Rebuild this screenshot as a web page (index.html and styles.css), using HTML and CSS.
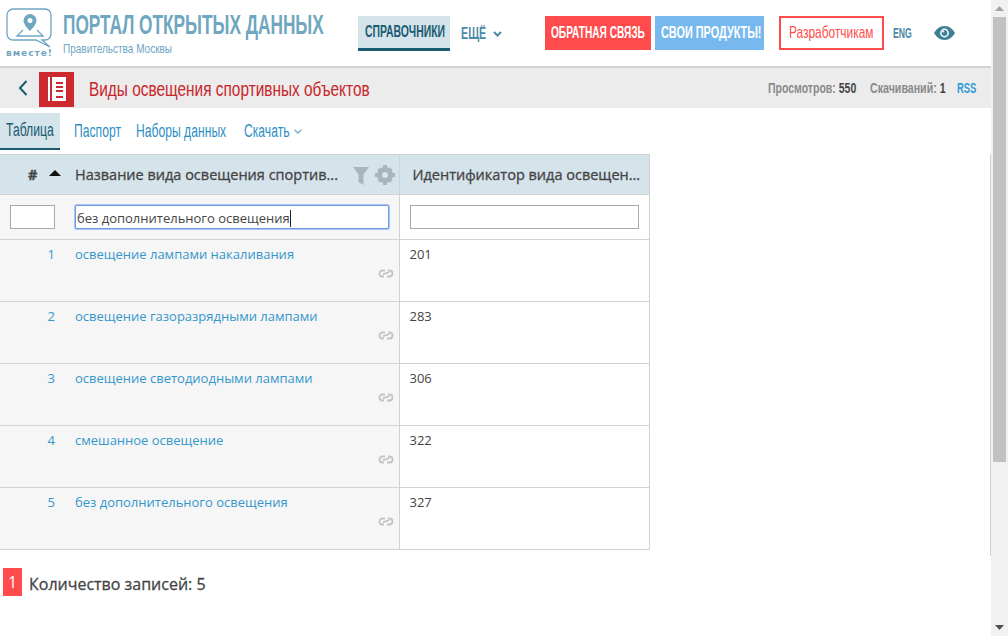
FILE: index.html
```html
<!DOCTYPE html>
<html lang="ru">
<head>
    <meta charset="UTF-8">
    <meta name="viewport" content="width=device-width, initial-scale=1.0">
    <title>Виды освещения спортивных объектов</title>
    <link rel="stylesheet" href="styles.css">
</head>
<body>
    <div class="page">
        <header class="top">
            <a href="#" class="logo">
                <svg width="47" height="41" viewBox="0 0 47 41" fill="none" stroke="#6fa6c0">
                    <path d="M7 1h32a6 6 0 0 1 6 6v19a6 6 0 0 1-6 6h-3l8 7-14-7H7a6 6 0 0 1-6-6V7a6 6 0 0 1 6-6z" stroke-width="1.300"/>
                    <path d="M24 6a6.500 6.500 0 0 0-6.500 6.500C17.500 17 24 23 24 23s6.500-6 6.500-10.500A6.500 6.500 0 0 0 24 6z" fill="#6fa6c0" stroke="none"/>
                    <circle cx="24" cy="12.500" r="2.500" fill="#fff" stroke="none"/>
                    <path d="M17 22l-6 6h26l-6-6" stroke-width="1.300"/>
                </svg>
                <span class="logo-word">вместе!</span>
            </a>
            <div class="brand">
                <div class="brand-title">ПОРТАЛ ОТКРЫТЫХ ДАННЫХ</div>
                <div class="brand-sub">Правительства Москвы</div>
            </div>
            <a href="#" class="nav-item active"><span>СПРАВОЧНИКИ</span></a>
            <a href="#" class="nav-item more"><span>ЕЩЁ</span>
                <svg width="9" height="6" viewBox="0 0 9 6" fill="none" stroke="#4a8aa5" stroke-width="2"><path d="M1 1l3.500 3.500L8 1"/></svg>
            </a>
            <a href="#" class="btn btn-red"><span>ОБРАТНАЯ СВЯЗЬ</span></a>
            <a href="#" class="btn btn-blue"><span>СВОИ ПРОДУКТЫ!</span></a>
            <a href="#" class="btn-dev"><span>Разработчикам</span></a>
            <a href="#" class="lang"><span>ENG</span></a>
            <svg class="eye" width="21" height="14" viewBox="0 0 21 14">
                <path d="M10.500 0C5.500 0 2 3.500 0 7c2 3.500 5.500 7 10.500 7S19 10.500 21 7c-2-3.500-5.500-7-10.500-7z" fill="#3f7f95"/>
                <circle cx="10.500" cy="7" r="4.400" fill="#fff"/>
                <circle cx="10.500" cy="7" r="2.900" fill="#3f7f95"/>
                <circle cx="9.300" cy="5.600" r="1" fill="#fff"/>
            </svg>
        </header>

        <div class="band">
            <svg class="back" width="10" height="16" viewBox="0 0 10 16" fill="none" stroke="#1a5b72" stroke-width="2"><path d="M8.500 1L2 8l6.500 7"/></svg>
            <div class="book">
                <svg width="18" height="24" viewBox="0 0 18 24">
                    <path d="M0 0h2v24H0zM4 0h14v24H4z" fill="#fff"/>
                    <path d="M8 5h7v2H8zM8 9h7v2H8zM8 13h7v2H8zM8 19h7v2H8z" fill="#cc2a2e"/>
                </svg>
            </div>
            <h1 class="band-title">Виды освещения спортивных объектов</h1>
            <div class="stats">
                <span class="stat-views">Просмотров: <b>550</b></span>
                <span class="stat-loads">Скачиваний: <b>1</b></span>
                <a href="#" class="stat-rss">RSS</a>
            </div>
        </div>

        <nav class="tabs">
            <a href="#" class="tab tab-table active"><span>Таблица</span></a>
            <a href="#" class="tab tab-pass"><span>Паспорт</span></a>
            <a href="#" class="tab tab-sets"><span>Наборы данных</span></a>
            <a href="#" class="tab tab-load"><span>Скачать</span>
                <svg width="8" height="5" viewBox="0 0 8 5" fill="none" stroke="#7fb0c8" stroke-width="1.500"><path d="M.5.700L4 4 7.500.700"/></svg>
            </a>
        </nav>

        <div class="table-wrap">
            <table class="grid">
                <colgroup>
                    <col class="col-num">
                    <col class="col-name">
                    <col class="col-id">
                </colgroup>
                <thead>
                    <tr class="head-row">
                        <th class="num-head">#<span class="sort"></span></th>
                        <th class="name-head">
                            <span>Название вида освещения спортив...</span>
                            <svg class="filter" width="16" height="18" viewBox="0 0 16 18"><path d="M0 0h16l-5.500 7.500V18l-5-3V7.500z" fill="#a9b5ba"/></svg>
                            <svg class="gear" width="20" height="20" viewBox="0 0 20 20">
                                <circle cx="10" cy="10" r="5.500" fill="none" stroke="#a9b5ba" stroke-width="5"/>
                                <path d="M8 0h4v3H8zM8 17h4v3H8zM0 8h3v4H0zM17 8h3v4h-3zM2.500 5L5 2.500l2 2L4.500 7zM15 17.500L12.500 15l2.500-2.500 2.500 2.500zM17.500 5L15 2.500l-2 2L15.500 7zM5 17.500L7.500 15 5 12.500 2.500 15z" fill="#a9b5ba"/>
                            </svg>
                        </th>
                        <th class="id-head">Идентификатор вида освещен...</th>
                    </tr>
                    <tr class="filter-row">
                        <td><input class="filter-input small" type="text"></td>
                        <td><div class="filter-input focused"><span class="caret">без дополнительного освещения</span></div></td>
                        <td><input class="filter-input" type="text"></td>
                    </tr>
                </thead>
                <tbody>
                    <tr>
                        <td class="num"><a href="#">1</a></td>
                        <td class="name"><a href="#">освещение лампами накаливания</a>
                            <svg class="chain" width="16" height="9" viewBox="0 0 16 9" fill="none" stroke="#c4c4c4" stroke-width="1.800"><path d="M7 1.500H4.500a3 3 0 0 0 0 6H6M10 1.500h1.500a3 3 0 0 1 0 6H9M5 5.500c2-2 4-1 6-2.500"/></svg>
                        </td>
                        <td class="id">201</td>
                    </tr>
                    <tr>
                        <td class="num"><a href="#">2</a></td>
                        <td class="name"><a href="#">освещение газоразрядными лампами</a>
                            <svg class="chain" width="16" height="9" viewBox="0 0 16 9" fill="none" stroke="#c4c4c4" stroke-width="1.800"><path d="M7 1.500H4.500a3 3 0 0 0 0 6H6M10 1.500h1.500a3 3 0 0 1 0 6H9M5 5.500c2-2 4-1 6-2.500"/></svg>
                        </td>
                        <td class="id">283</td>
                    </tr>
                    <tr>
                        <td class="num"><a href="#">3</a></td>
                        <td class="name"><a href="#">освещение светодиодными лампами</a>
                            <svg class="chain" width="16" height="9" viewBox="0 0 16 9" fill="none" stroke="#c4c4c4" stroke-width="1.800"><path d="M7 1.500H4.500a3 3 0 0 0 0 6H6M10 1.500h1.500a3 3 0 0 1 0 6H9M5 5.500c2-2 4-1 6-2.500"/></svg>
                        </td>
                        <td class="id">306</td>
                    </tr>
                    <tr>
                        <td class="num"><a href="#">4</a></td>
                        <td class="name"><a href="#">смешанное освещение</a>
                            <svg class="chain" width="16" height="9" viewBox="0 0 16 9" fill="none" stroke="#c4c4c4" stroke-width="1.800"><path d="M7 1.500H4.500a3 3 0 0 0 0 6H6M10 1.500h1.500a3 3 0 0 1 0 6H9M5 5.500c2-2 4-1 6-2.500"/></svg>
                        </td>
                        <td class="id">322</td>
                    </tr>
                    <tr>
                        <td class="num"><a href="#">5</a></td>
                        <td class="name"><a href="#">без дополнительного освещения</a>
                            <svg class="chain" width="16" height="9" viewBox="0 0 16 9" fill="none" stroke="#c4c4c4" stroke-width="1.800"><path d="M7 1.500H4.500a3 3 0 0 0 0 6H6M10 1.500h1.500a3 3 0 0 1 0 6H9M5 5.500c2-2 4-1 6-2.500"/></svg>
                        </td>
                        <td class="id">327</td>
                    </tr>
                </tbody>
            </table>
        </div>

        <div class="total">
            <span class="page-num">1</span>
            <span class="total-text">Количество записей: 5</span>
        </div>
    </div>

    <div class="scrollbar">
        <svg width="9" height="5" viewBox="0 0 9 5"><path d="M4.500 0L9 5H0z" fill="#a3a3a3"/></svg>
        <div class="thumb"></div>
        <svg class="down" width="9" height="5" viewBox="0 0 9 5"><path d="M0 0h9L4.500 5z" fill="#505050"/></svg>
    </div>
</body>
</html>
```

FILE: styles.css
```css
* {
    box-sizing: border-box;
}
html, body {
    height: 100%;
    overflow: hidden;
}
body {
    margin: 0;
    display: flex;
    background: #fff;
    font-family: "Open Sans", sans-serif;
    font-size: 13px;
    color: #444;
}
a {
    text-decoration: none;
    color: inherit;
}
.page {
    flex: 1;
    min-width: 0;
}
.top, .band, .stats, .tabs, .tab, .total, .nav-item, .btn, .btn-dev {
    display: flex;
    align-items: center;
}

/* no condensed face is installed, so the narrow labels are squeezed from Liberation Sans */
.top, .band-title, .stats, .tabs {
    font-family: "Liberation Sans", Arial, sans-serif;
}
.brand-title, .brand-sub, .band-title, .stat-views, .stat-loads, .stat-rss,
.nav-item span, .btn span, .btn-dev span, .lang span, .tab span {
    display: inline-block;
    flex-shrink: 0;
    white-space: nowrap;
    transform-origin: left center;
}

/* header */
.top {
    height: 68px;
    border-bottom: 2px solid #d2d2d2;
    padding: 8px 0 0 6px;
    align-items: flex-start;
}
.logo {
    width: 47px;
    display: flex;
    flex-direction: column;
    align-items: center;
}
.logo-word {
    font-family: "DejaVu Sans", sans-serif;
    font-size: 9px;
    font-weight: bold;
    letter-spacing: 1px;
    color: #6fa6c0;
    line-height: 9px;
    white-space: nowrap;
}
.brand {
    width: 295px;
    margin-left: 10px;
    color: #6fa6c0;
}
.brand-title {
    font-size: 28px;
    font-weight: bold;
    line-height: 32px;
    margin-top: 1px;
    transform: scaleX(.616);
}
.brand-sub {
    font-size: 13px;
    line-height: 16px;
    margin-top: -2px;
    transform: scaleX(.77);
}
.nav-item {
    height: 35px;
    margin-top: 8px;
    font-size: 16px;
    font-weight: bold;
}
.nav-item.active {
    width: 92px;
    padding-left: 7px;
    background: #d5e3eb;
    border-bottom: 3px solid #1a5b72;
    color: #1a5b72;
}
.nav-item.active span {
    transform: scaleX(.65);
}
.nav-item.more {
    width: 84px;
    margin-left: 11px;
    color: #4a8aa5;
}
.nav-item.more span {
    width: 32px;
    transform: scaleX(.67);
}
.btn {
    height: 34px;
    margin-top: 8px;
    padding-left: 6px;
    color: #fff;
    font-size: 16px;
    font-weight: bold;
}
.btn-red {
    width: 106px;
    background: #ff4b4b;
}
.btn-red span {
    transform: scaleX(.632);
}
.btn-blue {
    width: 109px;
    margin-left: 4px;
    background: #77b9ee;
}
.btn-blue span {
    transform: scaleX(.68);
}
.btn-dev {
    width: 105px;
    height: 34px;
    margin: 8px 0 0 15px;
    padding-left: 8px;
    border: 2px solid #ff4b4b;
    color: #ff4b4b;
    font-size: 17px;
}
.btn-dev span {
    transform: scaleX(.7);
}
.lang {
    margin: 8px 0 0 9px;
    width: 41px;
    line-height: 34px;
    font-size: 14px;
    font-weight: bold;
    color: #4a8aa5;
}
.lang span {
    transform: scaleX(.62);
}
.eye {
    margin-top: 18px;
}

/* title band */
.band {
    height: 40px;
    background: #ececec;
    padding-left: 18px;
}
.back {
    margin-right: 11px;
}
.book {
    width: 35px;
    height: 35px;
    margin-top: 2px;
    display: flex;
    align-items: center;
    justify-content: center;
    background: #cc2a2e;
}
.band-title {
    width: 679px;
    margin: 2px 0 0 15px;
    font-size: 20px;
    font-weight: normal;
    color: #c9252b;
    transform: scaleX(.77);
}
.stats {
    font-size: 14px;
    font-weight: bold;
    color: #8a8a8a;
}
.stats b {
    color: #444;
}
.stat-views {
    width: 102px;
    transform: scaleX(.75);
}
.stat-loads {
    width: 87px;
    transform: scaleX(.76);
}
.stat-rss {
    transform: scaleX(.67);
    color: #2e9bd6;
}

/* tabs */
.tabs {
    height: 37px;
    margin-top: 5px;
    font-size: 18px;
    color: #2e8fc4;
}
.tab {
    height: 100%;
    padding-left: 6px;
    flex-shrink: 0;
}
.tab span {
    transform: scaleX(.675);
}
.tab-table {
    width: 68px;
}
.tab-pass {
    width: 62px;
}
.tab-sets {
    width: 108px;
}
.tab-load span {
    width: 50px;
}
.tab.active {
    width: 60px;
    margin-right: 8px;
    background: #d5e3eb;
    border-bottom: 2px solid #1a5b72;
    color: #1a5b72;
}

/* table */
.table-wrap {
    height: 402px;
    margin-top: 4px;
    border-right: 1px solid #d2d2d2;
}
.grid {
    width: 650px;
    table-layout: fixed;
    border-collapse: collapse;
}
.col-num {
    width: 68px;
}
.col-name {
    width: 331px;
}
.grid th, .grid td {
    padding: 0;
    border-bottom: 1px solid #d2d2d2;
}
.grid tr > :nth-child(2) {
    border-right: 1px solid #d2d2d2;
}
.grid tr > :last-child {
    border-right: 1px solid #d2d2d2;
}
.head-row {
    height: 40px;
    background: #d5e3eb;
    font-size: 14.5px;
    color: #444;
}
.head-row th {
    border-top: 1px solid #d2d2d2;
    font-weight: normal;
    -webkit-text-stroke: .3px #444;
    text-align: left;
    white-space: nowrap;
    position: relative;
}
.head-row .num-head {
    padding-left: 28px;
    font-weight: bold;
}
.sort {
    position: absolute;
    left: 49px;
    top: 15px;
    border: 6px solid transparent;
    border-top: 0;
    border-bottom: 6px solid #111;
}
.head-row .name-head {
    padding-left: 7px;
}
.filter {
    position: absolute;
    left: 285px;
    top: 12px;
}
.gear {
    position: absolute;
    left: 307px;
    top: 10px;
}
.head-row .id-head {
    padding-left: 13px;
}
.filter-row {
    height: 45px;
}
.filter-row td:nth-child(-n+2), .grid tbody td:nth-child(-n+2) {
    background: #f6f6f6;
}
.filter-row td:first-child {
    padding-left: 10px;
}
.filter-row td:nth-child(2) {
    padding-left: 7px;
}
.filter-row td:nth-child(3) {
    padding-left: 10px;
}
.filter-input {
    display: block;
    width: 229px;
    height: 24px;
    padding: 0 1px;
    border: 1px solid #a9a9a9;
    background: #fff;
    font-family: "Open Sans", sans-serif;
    font-size: 13px;
    color: #444;
}
.filter-input.small {
    width: 45px;
}
.filter-input.focused {
    width: 314px;
    border: 1px solid #6f9be0;
    border-radius: 2px;
    box-shadow: 0 0 0 1px #a9c4ef;
    line-height: 22px;
}
.caret {
    display: inline-block;
    height: 17px;
    line-height: 16px;
    border-right: 1px solid #222;
    vertical-align: middle;
}
.grid tbody tr {
    height: 62px;
}
.grid tbody td {
    vertical-align: top;
    padding-top: 5px;
    position: relative;
}
.grid tbody a {
    color: #3596cc;
}
.grid tbody .num {
    padding-right: 13px;
    text-align: right;
}
.grid tbody .name {
    padding-left: 7px;
}
.grid tbody .id {
    padding-left: 10px;
}
.chain {
    position: absolute;
    left: 310px;
    top: 29px;
}

/* footer */
.total {
    margin: 12px 0 0 3px;
    gap: 7px;
}
.page-num {
    width: 19px;
    height: 28px;
    display: flex;
    align-items: center;
    justify-content: center;
    background: #ff4b4b;
    color: #fff;
    font-size: 16px;
}
.total-text {
    padding-top: 4px;
    font-size: 16px;
    -webkit-text-stroke: .3px #444;
    color: #444;
}

/* scrollbar */
.scrollbar {
    width: 17px;
    height: 100%;
    flex-shrink: 0;
    padding-top: 6px;
    display: flex;
    flex-direction: column;
    align-items: center;
    background: #f1f1f1;
}
.thumb {
    width: 13px;
    height: 445px;
    margin-top: 6px;
    background: #c1c1c1;
}
.down {
    margin-top: auto;
    margin-bottom: 6px;
}
```
